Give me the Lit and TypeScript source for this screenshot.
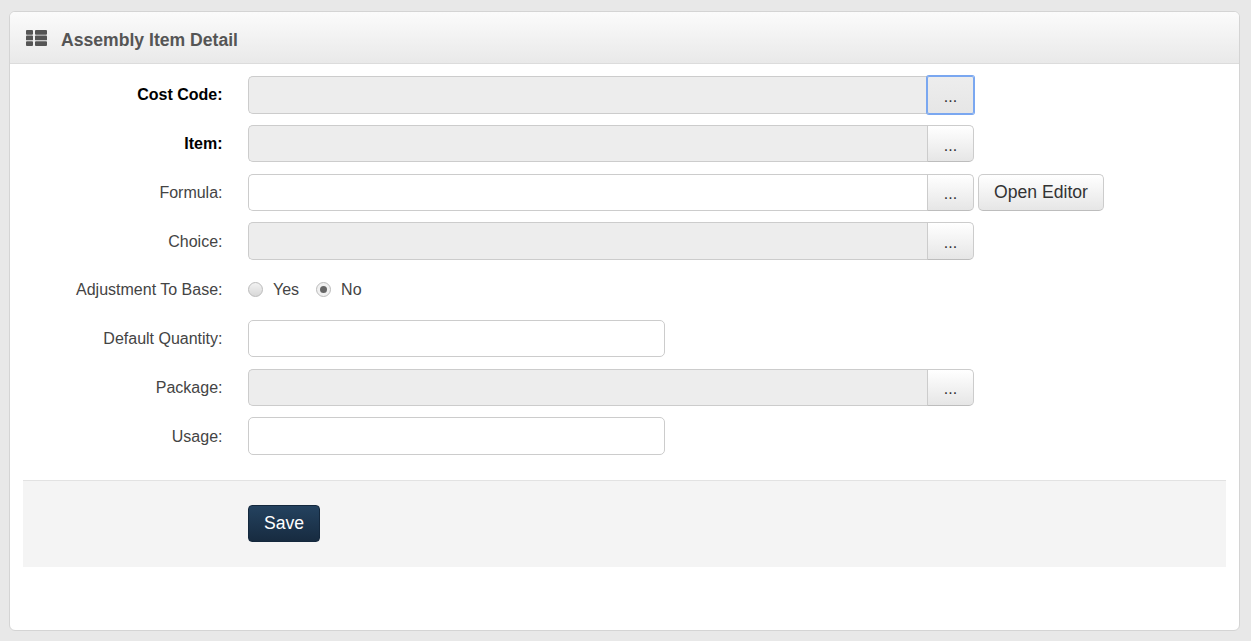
import { LitElement, html, css } from "lit";
import { customElement } from "lit/decorators.js";

type Row = { label: string; bold?: boolean; kind: "lookup" | "text" | "radio"; disabled?: boolean; focus?: boolean; extra?: boolean };

const rows: Row[] = [
  { label: "Cost Code:", bold: true, kind: "lookup", disabled: true, focus: true },
  { label: "Item:", bold: true, kind: "lookup", disabled: true },
  { label: "Formula:", kind: "lookup", extra: true },
  { label: "Choice:", kind: "lookup", disabled: true },
  { label: "Adjustment To Base:", kind: "radio" },
  { label: "Default Quantity:", kind: "text" },
  { label: "Package:", kind: "lookup", disabled: true },
  { label: "Usage:", kind: "text" },
];

@customElement("app-root")
export class AppRoot extends LitElement {
  static styles = css`
    :host { display: block; height: 641px; background: #e8e8e8; font-family: "Liberation Sans", Arial, sans-serif; overflow: hidden; box-sizing: border-box; padding: 11px 11px 10px 9px; }
    * { box-sizing: border-box; }
    .panel { height: 620px; background: #fff; border: 1px solid #d4d4d4; border-radius: 6px; overflow: hidden; }
    .head { height: 52px; display: flex; align-items: center; padding: 0 0 0 16px; border-bottom: 1px solid #dcdcdc; background: linear-gradient(#fbfbfb, #e9e9e9); color: #555; }
    .head svg { width: 21px; height: 16px; display: block; }
    .head h1 { margin: 7px 0 0 14px; font-size: 17.6px; font-weight: 700; line-height: 1; color: #555; }
    .body { padding: 12px 13px 0; }
    .row { display: grid; grid-template-columns: 199.5px 1fr; column-gap: 25.5px; align-items: center; height: 37.55px; margin-bottom: 11.23px; }
    .lbl { text-align: right; font-size: 16px; color: #444; padding-top: 1.2px; }
    .lbl.b { font-weight: 700; color: #000; }
    .ctl { display: flex; align-items: stretch; height: 37.55px; }
    .inp { border: 1px solid #ccc; background: #fff; border-radius: 5px; height: 100%; }
    .grp { width: 680px; border-radius: 5px 0 0 5px; border-right: 0; }
    .small { width: 417px; }
    .dis { background: #ededed; }
    .dots { width: 47px; margin-left: -1px; font: 16px "Liberation Sans", Arial, sans-serif; color: #333; border: 1px solid #ccc; border-bottom-color: #bdbdbd; border-radius: 0 5px 5px 0; background: linear-gradient(#fff, #e6e6e6); padding: 4px 0 0; position: relative; }
    .dots.foc { border: 1px solid #7aa7f0; box-shadow: 0 0 0 1px #7aa7f0; border-radius: 2px; background: linear-gradient(#ededed, #e6e6e6); }
    .open { margin-left: 4px; width: 126px; font: 17.6px "Liberation Sans", Arial, sans-serif; color: #333; border: 1px solid #ccc; border-bottom-color: #bdbdbd; border-radius: 5px; background: linear-gradient(#fff, #e6e6e6); padding: 0; }
    .radios { display: flex; align-items: center; font-size: 16px; color: #444; height: 100%; }
    .radio { width: 15px; height: 15px; border-radius: 50%; border: 1px solid #bbb; background: linear-gradient(#f2f2f2, #d8d8d8); margin-right: 10px; display: flex; align-items: center; justify-content: center; }
    .radio.on i { display: block; width: 7px; height: 7px; border-radius: 50%; background: #666; }
    .radio.on { background: #f0f0f0; }
    .txt { margin-right: 17px; }
    .foot { margin-top: 25.2px; height: 87px; background: #f4f4f4; border-top: 1px solid #e2e2e2; padding: 24px 0 0 225px; }
    .save { width: 72px; height: 37px; font: 17.6px "Liberation Sans", Arial, sans-serif; color: #fff; border: 1px solid #14283d; border-radius: 4px; background: linear-gradient(#24425f, #172b40); padding: 0; }
  `;

  private renderControl(r: Row) {
    if (r.kind === "radio") {
      return html`<div class="radios">
        <span class="radio"></span><span class="txt">Yes</span>
        <span class="radio on"><i></i></span><span>No</span>
      </div>`;
    }
    if (r.kind === "text") {
      return html`<div class="ctl"><div class="inp small"></div></div>`;
    }
    return html`<div class="ctl">
      <div class="inp grp ${r.disabled ? "dis" : ""}"></div>
      <button class="dots ${r.focus ? "foc" : ""}">...</button>
      ${r.extra ? html`<button class="open">Open Editor</button>` : ""}
    </div>`;
  }

  render() {
    return html`<section class="panel">
      <header class="head">
        <svg viewBox="0 0 21 16" fill="#555" aria-hidden="true">
          <rect x="0" y="0" width="7" height="4.7" rx="0.9"/><rect x="9" y="0" width="12" height="4.7" rx="0.9"/>
          <rect x="0" y="5.6" width="7" height="4.7" rx="0.9"/><rect x="9" y="5.6" width="12" height="4.7" rx="0.9"/>
          <rect x="0" y="11.2" width="7" height="4.7" rx="0.9"/><rect x="9" y="11.2" width="12" height="4.7" rx="0.9"/>
        </svg>
        <h1>Assembly Item Detail</h1>
      </header>
      <div class="body">
        ${rows.map(r => html`<div class="row">
          <div class="lbl ${r.bold ? "b" : ""}">${r.label}</div>
          ${this.renderControl(r)}
        </div>`)}
        <div class="foot"><button class="save">Save</button></div>
      </div>
    </section>`;
  }
}
